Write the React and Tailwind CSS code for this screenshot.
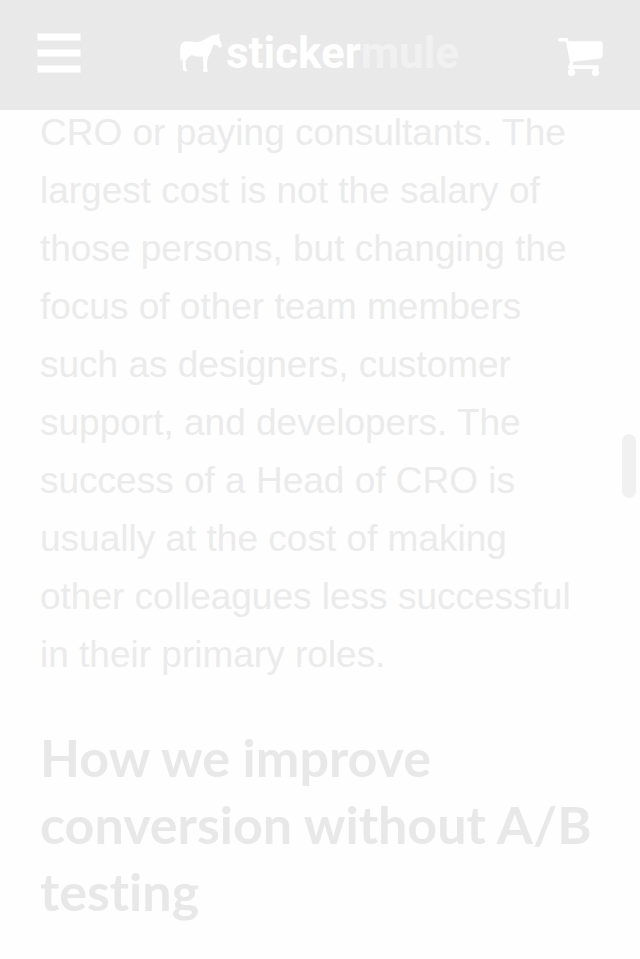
function MenuButton() {
  return (
    <button type="button" aria-label="Menu" className="flex w-11 flex-col gap-2">
      <span className="h-2 w-full border border-[#f4f4f4] bg-white" />
      <span className="h-2 w-full border border-[#f4f4f4] bg-white" />
      <span className="h-2 w-full border border-[#f4f4f4] bg-white" />
    </button>
  );
}

function MuleIcon() {
  return (
    <svg viewBox="0 0 42 40" className="h-10 w-[42px] fill-white" aria-hidden="true">
      <path d="M38.8 0 L38.5 2 L40 1.2 L39 3.8 L40.2 8 L42 12.5 L41.3 14.2 L39.4 14.8 L37 12.2 L33.8 11.6 L32 15 L30.6 19.5 L28.5 23 L27.2 28 L27 35 L27.8 38.8 L24 39 L22.8 37.5 L23.7 35 L23.2 30 L22.8 23.8 L17 23.4 L11.8 22 L8 24.5 L5.5 28 L5.8 34 L7.2 37.8 L5.8 38.5 L3 37.5 L2.6 31 L2.8 25 L1 28 L0.2 24 L0.2 15 Q0.6 9.5 5 8.4 L11 8.4 Q18 10 22 7.8 L28.5 4.2 Q32 1.8 37.3 1.8 Z" />
    </svg>
  );
}

function CartIcon() {
  return (
    <svg viewBox="0 0 46 39" className="h-[39px] w-[46px] fill-white" aria-hidden="true">
      <path d="M1.5 0 H8.5 Q9.7 0 10 1.2 L10.6 3.3 H42.5 Q45 3.3 44.8 6 L44.6 18.5 Q44.4 20.2 42.5 20.4 L15 23.8 L14.8 27.3 H39.5 Q41.3 27.4 41.3 29 Q41.3 31 39.5 31 H11.5 Q10 31 10.2 28.8 L12 24.5 L8 3.5 H1.5 Q0 3.2 0 1.7 Q0 0.2 1.5 0 Z" />
      <circle cx="13.5" cy="34.5" r="3.7" />
      <circle cx="37.5" cy="34.5" r="3.7" />
    </svg>
  );
}

export default function App() {
  return (
    <div className="min-h-screen bg-[#fefefe] font-['Liberation_Sans',Arial,sans-serif]">
      <header className="sticky top-0 z-10 flex h-[110px] items-center justify-between bg-[#e9e9e9] pr-9 pb-1 pl-[37px]">
        <MenuButton />
        <a href="#home" aria-label="Sticker Mule" className="flex items-center gap-1">
          <MuleIcon />
          <span className="font-['Roboto',sans-serif] text-[44px] leading-[44px] font-bold text-white">
            sticker<span className="text-[#f1f1f1]">mule</span>
          </span>
        </a>
        <a href="#cart" aria-label="Cart" className="pt-2">
          <CartIcon />
        </a>
      </header>

      <main className="px-10">
        <p className="-mt-1.5 text-[37px] leading-[58px] text-[#ebebeb]">
          CRO or paying consultants. The largest cost is not the salary of those persons, but
          changing the focus of other team members such as designers, customer support, and
          developers. The success of a Head of CRO is usually at the cost of making other
          colleagues less successful in their primary roles.
        </p>
        <h2 className="mt-10 font-['Lato',sans-serif] text-[52px] leading-[67px] font-bold text-[#e8e8e8] [font-variant-ligatures:none]">
          How we improve conversion without A/B testing
        </h2>
      </main>

      <div className="fixed top-[434px] right-1 z-20 h-16 w-3.5 rounded-full bg-[#f1f1f1]" />
    </div>
  );
}
